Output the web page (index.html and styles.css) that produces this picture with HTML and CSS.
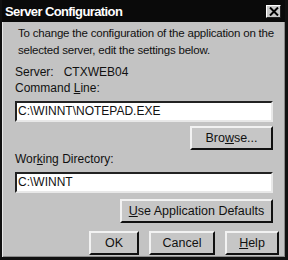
FILE: index.html
```html
<!DOCTYPE html>
<html lang="en">
  <head>
    <meta charset="UTF-8" />
    <title>Server Configuration</title>
    <link rel="stylesheet" href="styles.css">
  </head>
  <body>
    <div class="vindue">
      <header class="titel">
        <h1>Server Configuration</h1>
        <div class="luk">
          <svg width="10" height="9" viewBox="0 0 10 9">
            <path d="M1 0.5 L9 8.5 M9 0.5 L1 8.5" stroke="#000" stroke-width="2" />
          </svg>
        </div>
      </header>
      <main>
        <p class="intro">To change the configuration of the application on the<br />selected server, edit the settings below.</p>
        <div class="server">
          <span>Server:</span>
          <span class="navn">CTXWEB04</span>
        </div>
        <label class="etiket">Command <u>L</u>ine:</label>
        <div class="felt">C:\WINNT\NOTEPAD.EXE</div>
        <div class="raekke">
          <button class="browse">Bro<u>w</u>se...</button>
        </div>
        <label class="etiket arbejd">Wor<u>k</u>ing Directory:</label>
        <div class="felt">C:\WINNT</div>
        <div class="raekke">
          <button class="standard"><u>U</u>se Application Defaults</button>
        </div>
        <div class="raekke knapper">
          <button class="ok">OK</button>
          <button class="cancel">Cancel</button>
          <button class="help"><u>H</u>elp</button>
        </div>
      </main>
    </div>
  </body>
</html>
```

FILE: styles.css
```css
* {
  margin: 0px;
  box-sizing: border-box;
}

body {
  background-color: #c3c3c3;
  font-family: "Liberation Sans", Arial, sans-serif;
  font-size: 12px;
  color: #111;
}

.vindue {
  width: 288px;
  height: 260px;
  background-color: #c3c3c3;
  border-left: 2px solid #111;
  border-right: 3px solid #111;
  border-bottom: 3px solid #111;
  display: flex;
  flex-direction: column;
  box-shadow: inset 1px 0px 0px #e8e8e8, inset -1px -1px 0px #8a8a8a;
}

.titel {
  height: 22px;
  background-color: #0a0a0a;
  display: flex;
  align-items: center;
  justify-content: space-between;
  padding: 0px 4px 0px 3px;
}

.titel h1 {
  color: white;
  font-size: 13px;
  font-weight: 700;
  letter-spacing: -0.6px;
}

.luk {
  width: 15px;
  height: 13px;
  background-color: #c8c8c8;
  border: 1px solid;
  border-color: #fff #222 #222 #fff;
  display: flex;
  align-items: center;
  justify-content: center;
}

main {
  padding: 0px 12px 0px 13px;
  display: flex;
  flex-direction: column;
}

.intro {
  margin-top: 3px;
  padding-left: 3px;
  line-height: 17px;
  font-size: 11.5px;
  letter-spacing: -0.2px;
  white-space: nowrap;
}

.server {
  margin-top: 5px;
  display: flex;
  line-height: 17px;
}

.server .navn {
  margin-left: 10px;
}

.etiket {
  margin-top: -1px;
  line-height: 17px;
}

.felt {
  margin-top: 4px;
  height: 21px;
  background-color: white;
  border: 2px solid;
  border-color: #222 #e8e8e8 #e8e8e8 #222;
  padding-left: 1px;
  line-height: 17px;
}

.raekke {
  display: flex;
  justify-content: flex-end;
  gap: 10px;
}

button {
  font-family: "Liberation Sans", Arial, sans-serif;
  font-size: 12.5px;
  color: #111;
  background-color: #c6c6c6;
  border: 2px solid;
  border-color: #f2f2f2 #111 #111 #f2f2f2;
  height: 24px;
  padding: 0px;
}

.browse {
  margin-top: 4px;
  width: 83px;
}

.arbejd {
  margin-top: 1px;
}

.standard {
  margin-top: 6px;
  width: 153px;
}

.knapper {
  margin-top: 8px;
  margin-right: -6px;
}

.ok {
  width: 50px;
}

.cancel {
  width: 66px;
}

.help {
  width: 54px;
}
```
